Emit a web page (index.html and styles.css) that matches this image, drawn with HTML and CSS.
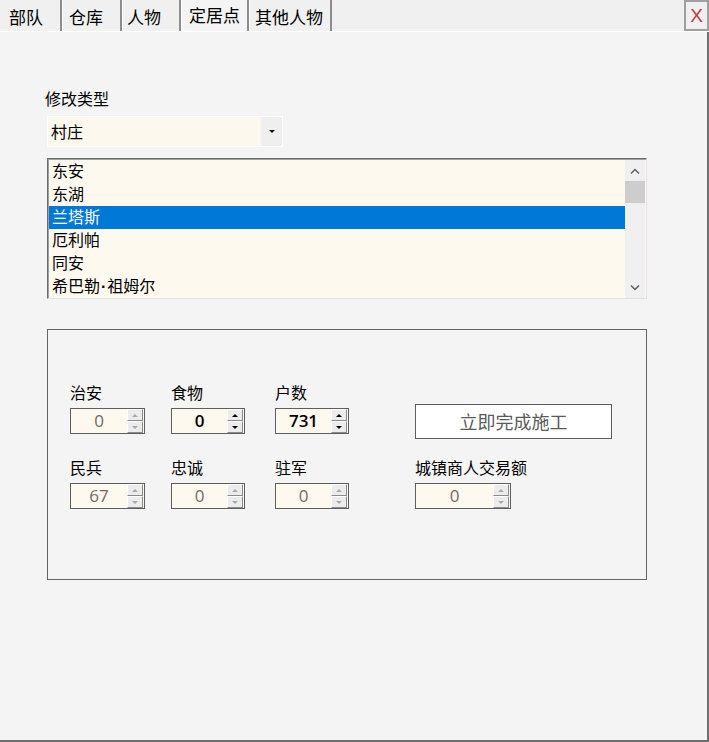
FILE: index.html
```html
<!DOCTYPE html>
<html lang="zh">
<head>
<meta charset="utf-8">
<title>定居点</title>
<link rel="stylesheet" href="styles.css">
</head>
<body>
<div class="window">
  <div class="tabbar">
    <div class="tab t1">部队</div>
    <div class="tab t2">仓库</div>
    <div class="tab t3">人物</div>
    <div class="tab t4 active">定居点</div>
    <div class="tab t5">其他人物</div>
    <div class="spacer"></div>
    <div class="close">X</div>
  </div>
  <div class="panel">
    <div class="label type-label">修改类型</div>
    <div class="combo">
      <span class="combo-text">村庄</span>
      <span class="combo-btn"><i class="tri-down"></i></span>
    </div>
    <div class="listbox">
      <ul class="items">
        <li>东安</li>
        <li>东湖</li>
        <li class="selected">兰塔斯</li>
        <li>厄利帕</li>
        <li>同安</li>
        <li>希巴勒<span class="dot">·</span>祖姆尔</li>
      </ul>
      <div class="scrollbar">
        <div class="sb-arrow">
          <svg width="10" height="6" viewBox="0 0 10 6"><polyline points="1,5.5 5,1.5 9,5.5" fill="none" stroke="#606060" stroke-width="1.5"/></svg>
        </div>
        <div class="sb-track"><div class="sb-thumb"></div></div>
        <div class="sb-arrow">
          <svg width="10" height="6" viewBox="0 0 10 6"><polyline points="1,0.5 5,4.5 9,0.5" fill="none" stroke="#606060" stroke-width="1.5"/></svg>
        </div>
      </div>
    </div>
    <div class="group">
      <div class="fields">
        <div class="field w75">
          <div class="label">治安</div>
          <div class="spin disabled"><span class="val">0</span><span class="btns"><span class="b"><i class="tri-up"></i></span><span class="b"><i class="tri-dn"></i></span></span></div>
        </div>
        <div class="field w74">
          <div class="label">食物</div>
          <div class="spin"><span class="val">0</span><span class="btns"><span class="b"><i class="tri-up"></i></span><span class="b"><i class="tri-dn"></i></span></span></div>
        </div>
        <div class="field w74">
          <div class="label">户数</div>
          <div class="spin"><span class="val">731</span><span class="btns"><span class="b"><i class="tri-up"></i></span><span class="b"><i class="tri-dn"></i></span></span></div>
        </div>
        <div class="field btn-cell">
          <div class="action">立即完成施工</div>
        </div>
        <div class="field w75">
          <div class="label">民兵</div>
          <div class="spin disabled"><span class="val">67</span><span class="btns"><span class="b"><i class="tri-up"></i></span><span class="b"><i class="tri-dn"></i></span></span></div>
        </div>
        <div class="field w74">
          <div class="label">忠诚</div>
          <div class="spin disabled"><span class="val">0</span><span class="btns"><span class="b"><i class="tri-up"></i></span><span class="b"><i class="tri-dn"></i></span></span></div>
        </div>
        <div class="field w74">
          <div class="label">驻军</div>
          <div class="spin disabled"><span class="val">0</span><span class="btns"><span class="b"><i class="tri-up"></i></span><span class="b"><i class="tri-dn"></i></span></span></div>
        </div>
        <div class="field w96">
          <div class="label">城镇商人交易额</div>
          <div class="spin disabled"><span class="val">0</span><span class="btns"><span class="b"><i class="tri-up"></i></span><span class="b"><i class="tri-dn"></i></span></span></div>
        </div>
      </div>
    </div>
  </div>
</div>
</body>
</html>
```

FILE: styles.css
```css
* { box-sizing: border-box; }

html, body {
  margin: 0;
  padding: 0;
  background: #f4f4f4;
}

body {
  font-family: "Noto Sans CJK SC", "Noto Sans", sans-serif;
  font-size: 16px;
  color: #000;
}

.window {
  width: 709px;
  height: 742px;
  display: flex;
  flex-direction: column;
}

/* Tabs */
.tabbar {
  display: flex;
  height: 32px;
  background: #f0f0f0;
  border-bottom: 1px solid #ffffff;
}

.tab {
  height: 31px;
  font-size: 17px;
  line-height: 31px;
  padding-top: 1px;
  padding-left: 7px;
  white-space: nowrap;
  border-right: 2px solid #8c8c8c;
  box-shadow: inset 1px 0 0 #ffffff;
}

.t1 { width: 62px; padding-left: 9px; box-shadow: none; }
.t2 { width: 60px; }
.t3 { width: 59px; padding-left: 5px; }
.t4 { width: 68px; padding-left: 8px; }
.t5 { width: 83px; padding-left: 6px; }

.tab.active {
  background: #f4f4f4;
  padding-top: 0;
  line-height: 29px;
}

.spacer { flex: 1; }

.close {
  width: 25px;
  height: 31px;
  border: 2px solid #a0a0a0;
  font-family: "Liberation Sans", sans-serif;
  font-size: 19px;
  line-height: 27px;
  text-align: center;
  color: #c23a3a;
}

/* Panel */
.panel {
  flex: 1;
  background: #f4f4f4;
  border-right: 2px solid #6e6e6e;
  border-bottom: 2px solid #6e6e6e;
  padding: 56px 0 0 47px;
}

.label {
  font-size: 16px;
  line-height: 20px;
  height: 20px;
  white-space: nowrap;
}

.type-label { margin-left: -2px; }

.combo {
  margin-top: 8px;
  width: 236px;
  height: 31px;
  display: flex;
  background: #fdf8ee;
  border: 1px solid #ffffff;
}

.combo-text {
  flex: 1;
  padding-left: 3px;
  line-height: 28px;
}

.combo-btn {
  width: 21px;
  background: #efefef;
  display: flex;
  align-items: center;
  justify-content: center;
}

.tri-down {
  display: block;
  width: 0;
  height: 0;
  border-left: 3px solid transparent;
  border-right: 3px solid transparent;
  border-top: 3px solid #000;
}

/* Listbox */
.listbox {
  margin-top: 11px;
  width: 600px;
  height: 141px;
  display: flex;
  background: #fdf9ef;
  border: 1px solid;
  border-color: #6b6b6b #e2e2e2 #e2e2e2 #6b6b6b;
  box-shadow: inset 1px 1px 0 #a0a0a0;
}

.items {
  list-style: none;
  margin: 0;
  padding: 1px 0 0 1px;
  flex: 1;
}

.items li {
  height: 23px;
  line-height: 21px;
  padding-left: 3px;
  white-space: nowrap;
}

.items li.selected {
  background: #0078d7;
  color: #ffffff;
}

.dot {
  font-family: "Liberation Sans", sans-serif;
  font-weight: bold;
  margin: 0 1px;
}

.scrollbar {
  width: 20px;
  margin-right: 1px;
  background: #f0f0f0;
  display: flex;
  flex-direction: column;
  margin-top: 1px;
}

.sb-arrow {
  height: 21px;
  display: flex;
  align-items: center;
  justify-content: center;
}

.sb-track { flex: 1; }

.sb-thumb {
  height: 22px;
  background: #cdcdcd;
}

/* Group box */
.group {
  margin-top: 30px;
  width: 600px;
  height: 251px;
  border: 1px solid #646464;
  padding: 52px 0 0 22px;
}

.fields {
  display: grid;
  grid-template-columns: 101px 104px 140px 197px;
  grid-template-rows: 52px 52px;
  row-gap: 23px;
}

.field {
  display: flex;
  flex-direction: column;
  gap: 6px;
}

.w75 .spin { width: 75px; }
.w74 .spin { width: 74px; }
.w96 .spin { width: 96px; }

.spin {
  height: 26px;
  display: flex;
  background: #fdf9ef;
  border: 1px solid #5e5e5e;
}

.spin .val {
  flex: 1;
  text-align: center;
  font-family: "Open Sans", "Noto Sans", sans-serif;
  font-size: 17px;
  font-weight: 600;
  line-height: 24px;
  color: #000;
}

.spin.disabled .val {
  font-weight: 400;
  color: #6f6a64;
}

.spin .btns {
  width: 17px;
  display: flex;
  flex-direction: column;
  padding: 0 1px 0 0;
}

.spin .b {
  flex: 1;
  display: flex;
  align-items: center;
  justify-content: center;
  background: #ececec;
  border: 1px solid;
  border-color: #ffffff #8a8a8a #8a8a8a #ffffff;
}

.tri-up, .tri-dn {
  display: block;
  width: 0;
  height: 0;
  border-left: 3px solid transparent;
  border-right: 3px solid transparent;
}

.tri-up { border-bottom: 3px solid #000; }
.tri-dn { border-top: 3px solid #000; }

.spin.disabled .tri-up { border-bottom-color: #a8a8a8; }
.spin.disabled .tri-dn { border-top-color: #a8a8a8; }

.btn-cell {
  padding-top: 22px;
}

.action {
  width: 197px;
  height: 35px;
  flex: none;
  background: #ffffff;
  border: 1px solid #5e5e5e;
  text-align: center;
  font-size: 18px;
  line-height: 32px;
  color: #5a5a5a;
}
```
